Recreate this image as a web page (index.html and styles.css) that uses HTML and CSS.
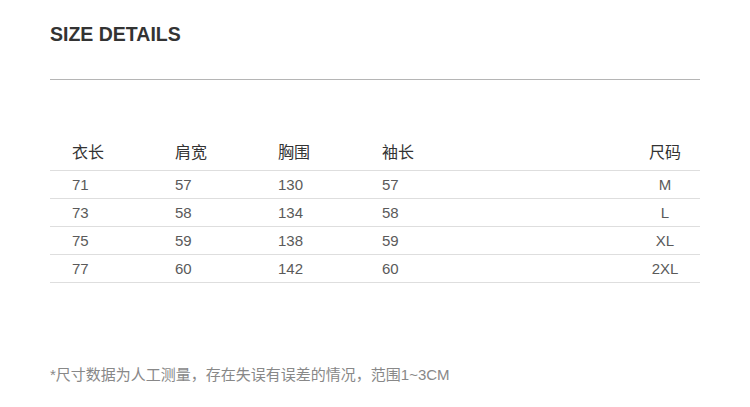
FILE: index.html
```html
<!DOCTYPE html>
<html lang="zh-CN">
<head>
<meta charset="utf-8">
<title>Size Details</title>
<link rel="stylesheet" href="styles.css">
</head>
<body>
<div class="page">
  <h1 class="title">SIZE DETAILS</h1>
  <div class="rule"></div>
  <div class="table">
    <div class="row head">
      <span>衣长</span><span>肩宽</span><span>胸围</span><span>袖长</span><span class="size">尺码</span>
    </div>
    <div class="row">
      <span>71</span><span>57</span><span>130</span><span>57</span><span class="size">M</span>
    </div>
    <div class="row">
      <span>73</span><span>58</span><span>134</span><span>58</span><span class="size">L</span>
    </div>
    <div class="row">
      <span>75</span><span>59</span><span>138</span><span>59</span><span class="size">XL</span>
    </div>
    <div class="row">
      <span>77</span><span>60</span><span>142</span><span>60</span><span class="size">2XL</span>
    </div>
  </div>
  <p class="note">*尺寸数据为人工测量，存在失误有误差的情况，范围1~3CM</p>
</div>
</body>
</html>
```

FILE: styles.css
```css
html, body {
  margin: 0;
  padding: 0;
  background: #ffffff;
}

.page {
  width: 650px;
  padding: 23px 0 0 50px;
  font-family: "Liberation Sans", "Noto Sans CJK SC", sans-serif;
}

.title {
  margin: 0;
  font-size: 19.5px;
  line-height: 22px;
  font-weight: bold;
  color: #333333;
}

.rule {
  margin-top: 34px;
  height: 1px;
  background: #b5b5b5;
}

.table {
  margin-top: 60px;
}

.row {
  display: grid;
  grid-template-columns: 103px 103px 104px 1fr 68px;
  padding: 0 1px 0 22px;
  line-height: 27px;
  font-size: 15px;
  color: #5a5a5a;
  border-bottom: 1px solid #dedede;
}

.row.head {
  padding-bottom: 8px;
  line-height: 22px;
  font-size: 16px;
  color: #333333;
  font-family: "Noto Sans CJK SC", sans-serif;
}

.size {
  text-align: center;
}

.note {
  margin: 81px 0 0 0;
  font-family: "Liberation Sans", "Noto Sans CJK SC", sans-serif;
  font-size: 15px;
  line-height: 22px;
  color: #888888;
}
```
